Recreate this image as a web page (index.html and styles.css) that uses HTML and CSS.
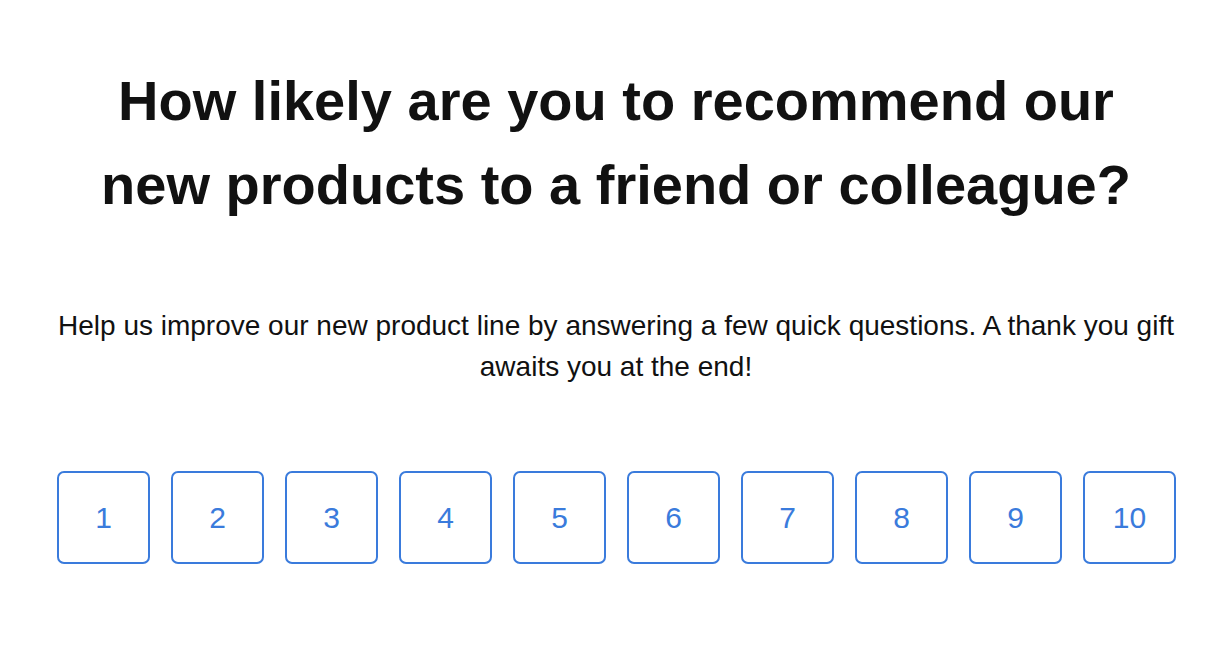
FILE: index.html
```html
<!DOCTYPE html>
<html lang="en">
<head>
    <meta charset="UTF-8">
    <meta name="viewport" content="width=device-width, initial-scale=1.0">
    <title>Survey</title>
    <link rel="stylesheet" href="styles.css">
</head>
<body>
    <main class="survey">
        <h1 class="question">How likely are you to recommend our new products to a friend or colleague?</h1>
        <p class="intro">Help us improve our new product line by answering a few quick questions. A thank you gift awaits you at the end!</p>

        <div class="scale">
            <button class="score">1</button>
            <button class="score">2</button>
            <button class="score">3</button>
            <button class="score">4</button>
            <button class="score">5</button>
            <button class="score">6</button>
            <button class="score">7</button>
            <button class="score">8</button>
            <button class="score">9</button>
            <button class="score">10</button>
        </div>
    </main>
</body>
</html>
```

FILE: styles.css
```css
body {
    margin: 0;
    font-family: "Liberation Sans", Arial, sans-serif;
    background-color: #fff;
    color: #111;
}
.survey {
    max-width: 1120px;
    margin: 0 auto;
    padding: 59px 0 40px;
    text-align: center;
}
.question {
    margin: 0 auto;
    max-width: 1060px;
    font-size: 56px;
    line-height: 84px;
    font-weight: bold;
}
.intro {
    margin: 78px 0 0;
    font-size: 28px;
    line-height: 41px;
}
.scale {
    display: flex;
    justify-content: space-between;
    margin-top: 84px;
    padding-left: 1px;
}
.score {
    width: 93px;
    height: 93px;
    padding: 0;
    border: 2px solid #3a7bdc;
    border-radius: 7px;
    background-color: #fff;
    color: #3a7bdc;
    font-family: inherit;
    font-size: 30px;
    cursor: pointer;
}
```
